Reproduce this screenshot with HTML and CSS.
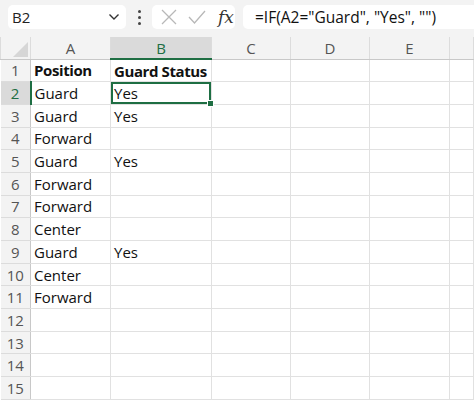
FILE: index.html
```html
<!DOCTYPE html>
<html lang="en">
<head>
  <meta charset="UTF-8" />
  <title>Sheet</title>
  <link rel="stylesheet" href="styles.css">
</head>
<body>
  <!-- Formula bar -->
  <div class="toolbar">
    <div class="namebox">
      <span>B2</span>
      <svg width="12" height="8" viewBox="0 0 12 8"><path d="M1.5 1.5 L6 6 L10.5 1.5" fill="none" stroke="#333" stroke-width="1.4"/></svg>
    </div>
    <div class="dots"><i></i><i></i><i></i></div>
    <div class="fxbox">
      <svg width="18" height="18" viewBox="0 0 18 18"><path d="M2 2 L16 16 M16 2 L2 16" stroke="#b8b8b8" stroke-width="1.3"/></svg>
      <svg width="18" height="18" viewBox="0 0 18 18"><path d="M1 9 L6.5 15 L17 3" fill="none" stroke="#b8b8b8" stroke-width="1.3"/></svg>
      <span class="fx">fx</span>
    </div>
    <div class="formula">=IF(A2="Guard", "Yes", "")</div>
  </div>

  <!-- Grid -->
  <table class="grid">
    <colgroup>
      <col class="c-num"><col class="c-a"><col class="c-b"><col class="c-c"><col class="c-d"><col class="c-e"><col>
    </colgroup>
    <thead>
      <tr>
        <th class="corner"><span class="tri"></span></th>
        <th>A</th><th class="active">B</th><th>C</th><th>D</th><th>E</th><th></th>
      </tr>
    </thead>
    <tbody>
      <tr><th>1</th><td class="bold">Position</td><td class="bold">Guard Status</td><td></td><td></td><td></td><td></td></tr>
      <tr><th class="active">2</th><td>Guard</td><td class="sel">Yes<span class="handle"></span></td><td></td><td></td><td></td><td></td></tr>
      <tr><th>3</th><td>Guard</td><td>Yes</td><td></td><td></td><td></td><td></td></tr>
      <tr><th>4</th><td>Forward</td><td></td><td></td><td></td><td></td><td></td></tr>
      <tr><th>5</th><td>Guard</td><td>Yes</td><td></td><td></td><td></td><td></td></tr>
      <tr><th>6</th><td>Forward</td><td></td><td></td><td></td><td></td><td></td></tr>
      <tr><th>7</th><td>Forward</td><td></td><td></td><td></td><td></td><td></td></tr>
      <tr><th>8</th><td>Center</td><td></td><td></td><td></td><td></td><td></td></tr>
      <tr><th>9</th><td>Guard</td><td>Yes</td><td></td><td></td><td></td><td></td></tr>
      <tr><th>10</th><td>Center</td><td></td><td></td><td></td><td></td><td></td></tr>
      <tr><th>11</th><td>Forward</td><td></td><td></td><td></td><td></td><td></td></tr>
      <tr><th>12</th><td></td><td></td><td></td><td></td><td></td><td></td></tr>
      <tr><th>13</th><td></td><td></td><td></td><td></td><td></td><td></td></tr>
      <tr><th>14</th><td></td><td></td><td></td><td></td><td></td><td></td></tr>
      <tr><th>15</th><td></td><td></td><td></td><td></td><td></td><td></td></tr>
    </tbody>
  </table>
</body>
</html>
```

FILE: styles.css
```css
body {
  margin: 0;
  font-family: 'Open Sans', 'Noto Sans', sans-serif;
  background: #fff;
  color: #111;
  overflow: hidden;
}

.toolbar {
  background: #f3f3f3;
  height: 37px;
  display: flex;
  align-items: flex-start;
  padding: 5px 0 0 8px;
  box-sizing: border-box;
}

.namebox {
  width: 118px;
  height: 24px;
  background: #fff;
  border-radius: 5px;
  display: flex;
  align-items: center;
  justify-content: space-between;
  padding: 0 6px 0 4px;
  box-sizing: border-box;
  font-size: 15px;
  color: #222;
}

.dots {
  width: 26px;
  height: 24px;
  display: flex;
  flex-direction: column;
  align-items: center;
  justify-content: center;
  gap: 3px;
}

.dots i {
  width: 3px;
  height: 3px;
  border-radius: 50%;
  background: #444;
}

.fxbox {
  width: 83px;
  height: 24px;
  background: #fff;
  border-radius: 5px;
  display: flex;
  align-items: center;
  gap: 10px;
  padding-left: 8px;
  box-sizing: border-box;
}

.fx {
  font-family: 'DejaVu Serif', 'Liberation Serif', serif;
  font-style: italic;
  font-size: 17px;
  color: #333;
  margin-left: 2px;
}

.formula {
  flex: 1;
  height: 24px;
  margin-left: 8px;
  background: #fff;
  border-radius: 5px 0 0 5px;
  font-size: 15.5px;
  line-height: 24px;
  padding-left: 12px;
  color: #111;
  white-space: nowrap;
}

.grid {
  border-collapse: collapse;
  table-layout: fixed;
  width: 100%;
}

.c-num { width: 30px; }
.c-a { width: 80px; }
.c-b { width: 101px; }
.c-c { width: 79px; }
.c-d { width: 79px; }
.c-e { width: 80px; }

.grid th,
.grid td {
  height: 22.7px;
  padding: 0;
  font-size: 15px;
  white-space: nowrap;
  overflow: visible;
  border: 1px solid #e1e1e1;
  box-sizing: border-box;
}

.grid td {
  padding-left: 3px;
  text-align: left;
}

.grid td.bold {
  font-weight: bold;
  letter-spacing: -0.4px;
}

.grid thead th {
  height: 22px;
  background: #f3f3f3;
  font-weight: normal;
  color: #555;
  border-color: #dcdcdc;
  border-top: none;
  border-bottom: 1px solid #c8c8c8;
}

.grid tbody th {
  background: #f3f3f3;
  font-weight: normal;
  color: #555;
  text-align: center;
  border-color: #dcdcdc;
  border-left: none;
  border-right: 1px solid #c8c8c8;
}

.grid thead th.active {
  background: #dadada;
  color: #1e6e43;
  border-bottom: 2px solid #1e6e43;
}

.grid tbody th.active {
  background: #dadada;
  color: #1e6e43;
  border-right: 2px solid #1e6e43;
}

.corner {
  position: relative;
}

.corner .tri {
  position: absolute;
  right: 2px;
  bottom: 2px;
  width: 0;
  height: 0;
  border-left: 15px solid transparent;
  border-bottom: 15px solid #d6d6d6;
}

.grid td.sel {
  position: relative;
  box-shadow: inset 0 0 0 2px #1e6e43;
}

.handle {
  position: absolute;
  right: -3px;
  bottom: -3px;
  width: 5px;
  height: 5px;
  background: #1e6e43;
  border: 1px solid #fff;
}
```
